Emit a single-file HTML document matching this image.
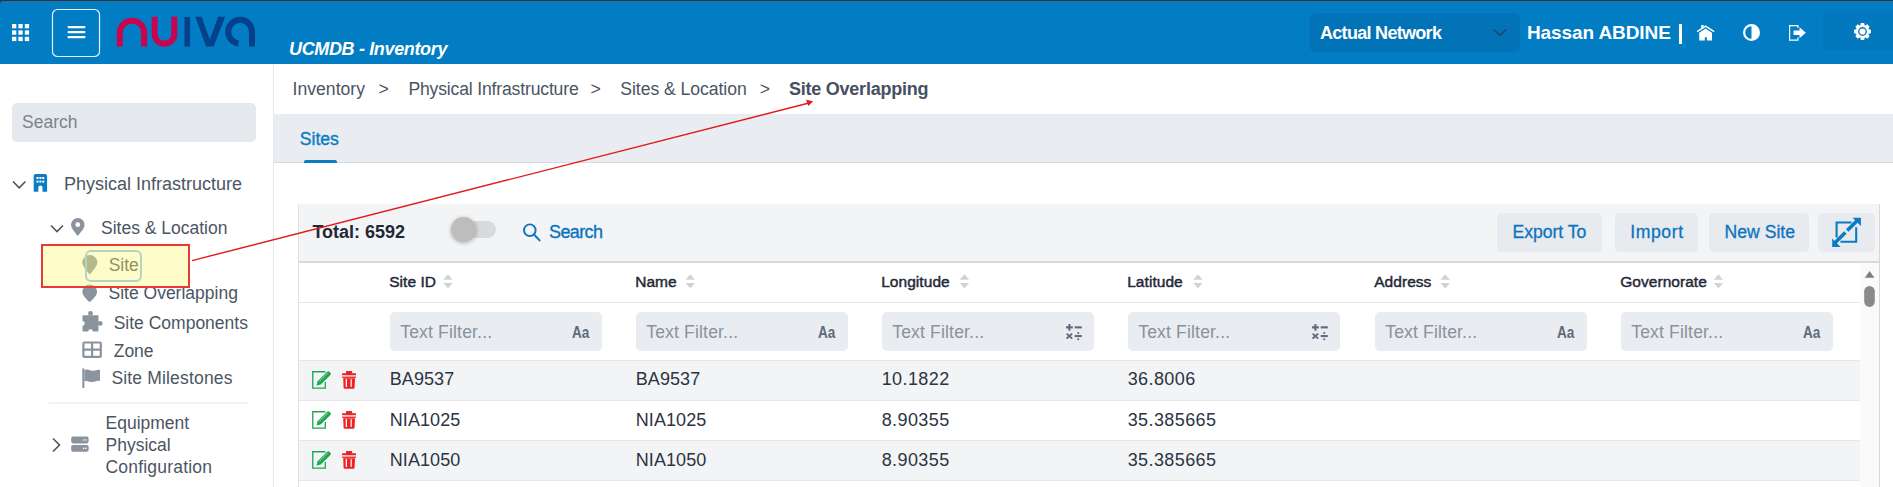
<!DOCTYPE html>
<html><head><meta charset="utf-8">
<style>
*{box-sizing:border-box;margin:0;padding:0}
html,body{width:1893px;height:487px;overflow:hidden;background:#fff;font-family:"Liberation Sans",sans-serif}
.a{position:absolute}
.t{position:absolute;white-space:nowrap;line-height:1}
.w{color:#fff;font-weight:bold}
.bc{color:#4b5463;font-size:17.6px}
.sb{color:#4b5563;font-size:17.5px}
.th{color:#1f2937;font-size:15.5px;font-weight:normal;letter-spacing:0.05px;-webkit-text-stroke:0.45px #1f2937}
.fi{background:#e9ecf0;border-radius:5px;height:38.8px;width:211.8px;top:312px}
.ph{color:#8a929c;font-size:17.6px;letter-spacing:0.15px}
.td{color:#2b3442;font-size:18px}
.btn{background:#e7eaee;border-radius:5px;top:213px;height:39px}
.bt{color:#0c74c0;font-size:17.6px;-webkit-text-stroke:0.3px #0c74c0}
</style></head>
<body>
<!-- HEADER -->
<div class="a" style="left:0;top:0;width:1893px;height:6px;background:#3a302a"></div>
<div class="a" style="left:0;top:1px;width:1893px;height:63px;background:#027dc4;border-top-left-radius:3px"></div>
<!-- apps grid -->
<svg class="a" style="left:0;top:0" width="110" height="64">
<g fill="#fff">
<rect x="12" y="24" width="4.3" height="4.3"/><rect x="18.4" y="24" width="4.3" height="4.3"/><rect x="24.8" y="24" width="4.3" height="4.3"/>
<rect x="12" y="30.4" width="4.3" height="4.3"/><rect x="18.4" y="30.4" width="4.3" height="4.3"/><rect x="24.8" y="30.4" width="4.3" height="4.3"/>
<rect x="12" y="36.8" width="4.3" height="4.3"/><rect x="18.4" y="36.8" width="4.3" height="4.3"/><rect x="24.8" y="36.8" width="4.3" height="4.3"/>
</g>
<rect x="52.5" y="9.5" width="47" height="47" rx="5" fill="none" stroke="#e8f2fa" stroke-width="1.2"/>
<g fill="#fff">
<rect x="67.5" y="25.9" width="18" height="2.3" rx="1.1"/>
<rect x="67.5" y="30.9" width="18" height="2.3" rx="1.1"/>
<rect x="67.5" y="36" width="18" height="2.3" rx="1.1"/>
</g>
</svg>
<!-- logo -->
<svg class="a" style="left:0;top:0" width="270" height="64">
<g fill="none" stroke="#c8044f" stroke-width="6">
<path d="M119.8 46.6V31.8A12.2 12.2 0 0 1 144.1 31.8V46.6"/>
<path d="M154.6 16.8V34A9.85 9.85 0 0 0 174.3 34V16.8"/>
</g>
<g fill="#05408a">
<rect x="184.5" y="17" width="5.6" height="29.6"/>
<polygon points="195.4,16.8 201.6,16.8 209.8,39.5 218.2,16.8 225.2,16.8 213.6,46.6 206,46.6"/>
</g>
<path d="M252 46.6V31.7A11.9 11.9 0 0 0 228.2 31.7A11.9 11.9 0 0 0 238.5 43.5" fill="none" stroke="#05408a" stroke-width="6"/>
</svg>
<div class="t w" style="left:289px;top:39.8px;font-size:18px;font-style:italic;letter-spacing:-0.35px">UCMDB - Inventory</div>

<!-- network dropdown -->
<div class="a" style="left:1310px;top:13px;width:210px;height:38.5px;background:#0373b8;border-radius:5px"></div>
<div class="t w" style="left:1320px;top:23.9px;font-size:18px;letter-spacing:-0.7px">Actual Network</div>
<svg class="a" style="left:1490px;top:24px" width="20" height="16"><path d="M3.6 5.4L9.8 11.4L16 5.4" fill="none" stroke="#1d4770" stroke-width="1.7"/></svg>
<div class="t w" style="left:1527px;top:22.8px;font-size:19px;letter-spacing:-0.1px">Hassan ABDINE</div>
<div class="a" style="left:1678.5px;top:24px;width:3px;height:19.5px;background:#fff"></div>
<!-- header icons -->
<div class="a" style="left:1823px;top:12px;width:70px;height:38px;background:#0378be"></div>
<svg class="a" style="left:1680px;top:0" width="213" height="64">
<g fill="#fff" transform="translate(-1680 0)">
<!-- home -->
<path d="M1697.1 31.6L1705.6 26.2L1714.1 31.6" fill="none" stroke="#fff" stroke-width="1.5"/>
<rect x="1701.2" y="25" width="2.4" height="3.4"/>
<path d="M1699.2 32.7L1705.6 28.4L1712 32.7V40.6H1706.9V37.2H1704.8V40.6H1699.2Z"/>
<!-- contrast -->
<circle cx="1751.5" cy="32.5" r="7.4" fill="none" stroke="#fff" stroke-width="2.2"/>
<path d="M1751.5 25.1A7.4 7.4 0 0 1 1751.5 39.9Z"/>
<!-- sign out -->
<path d="M1789 25H1798.5V28H1797.3V26.2H1790.2V39.5H1797.3V37.5H1798.5V40.7H1789Z"/>
<path d="M1793.5 30.5H1799.5V27.3L1805.8 32.8L1799.5 38.3V35.1H1793.5Z"/>
<!-- gear -->
<path d="M1860.32 25.17 L1860.86 23.06 L1864.14 23.06 L1864.68 25.17 L1865.44 25.48 L1867.31 24.37 L1869.63 26.69 L1868.52 28.56 L1868.83 29.32 L1870.94 29.86 L1870.94 33.14 L1868.83 33.68 L1868.52 34.44 L1869.63 36.31 L1867.31 38.63 L1865.44 37.52 L1864.68 37.83 L1864.14 39.94 L1860.86 39.94 L1860.32 37.83 L1859.56 37.52 L1857.69 38.63 L1855.37 36.31 L1856.48 34.44 L1856.17 33.68 L1854.06 33.14 L1854.06 29.86 L1856.17 29.32 L1856.48 28.56 L1855.37 26.69 L1857.69 24.37 L1859.56 25.48Z"/><circle cx="1862.5" cy="31.5" r="4.4" fill="#0378be"/><circle cx="1862.5" cy="31.5" r="3.1"/>
</g>
</svg>
<!--SIDEBAR-->
<div class="a" style="left:273px;top:64px;width:1px;height:423px;background:#e6e8ec"></div>
<div class="a" style="left:12px;top:103px;width:244px;height:39px;background:#e5e8ec;border-radius:5px"></div>
<div class="t" style="left:22px;top:113.9px;font-size:17.5px;color:#7b838d">Search</div>
<svg class="a" style="left:0;top:160px" width="273" height="327">
<g transform="translate(0 -160)">
<path d="M13 181.5L19.2 187.8L25.4 181.5" fill="none" stroke="#4b5563" stroke-width="1.6"/>
<path d="M33.7 176A2 2 0 0 1 35.7 174H45.1A2 2 0 0 1 47.1 176V191.8H42.5V187.5A2 2 0 0 0 38.3 187.5V191.8H33.7Z" fill="#0b7bc4"/>
<g fill="#fff"><rect x="36.5" y="177" width="2" height="2"/><rect x="39.4" y="177" width="2" height="2"/><rect x="42.3" y="177" width="2" height="2"/>
<rect x="36.5" y="180.6" width="2" height="2"/><rect x="39.4" y="180.6" width="2" height="2"/><rect x="42.3" y="180.6" width="2" height="2"/></g>
<path d="M51 225.5L57 231.5L63 225.5" fill="none" stroke="#4b5563" stroke-width="1.6"/>
<path d="M77.8 218A6.8 6.8 0 0 1 84.6 224.8C84.6 228.8 79.5 233.5 77.8 236C76.1 233.5 71 228.8 71 224.8A6.8 6.8 0 0 1 77.8 218ZM77.8 222.3A2.4 2.4 0 1 0 77.8 227.1A2.4 2.4 0 1 0 77.8 222.3Z" fill="#8a939e" fill-rule="evenodd"/>
<!-- site pin -->
<path d="M89.8 255A7.5 7.5 0 0 1 97.3 262.5C97.3 266 92.3 271.5 89.8 274.4C87.3 271.5 82.3 266 82.3 262.5A7.5 7.5 0 0 1 89.8 255Z" fill="#8a939e"/>
<!-- overlapping pin -->
<path d="M89.7 284.6A7.4 7.4 0 0 1 97.1 292C97.1 295.5 92 300 89.7 302.3C87.4 300 82.3 295.5 82.3 292A7.4 7.4 0 0 1 89.7 284.6Z" fill="#8a939e"/>
<!-- puzzle -->
<rect x="82.5" y="315.3" width="16" height="16.2" rx="1" fill="#8a939e"/>
<circle cx="90.5" cy="313.4" r="2.4" fill="#8a939e"/><circle cx="100.2" cy="323.4" r="2.4" fill="#8a939e"/>
<circle cx="82.4" cy="323.4" r="2.3" fill="#fff"/><circle cx="90.5" cy="331.6" r="2.3" fill="#fff"/>
<!-- zone grid -->
<g fill="none" stroke="#8a939e" stroke-width="2.2"><rect x="83.4" y="342.5" width="17.4" height="14.4" rx="1"/><path d="M92.1 342.5V356.9M83.4 349.7H100.8"/></g>
<!-- flag -->
<path d="M82.3 368.5H84.4V388.1H82.3Z" fill="#8a939e"/>
<path d="M84.4 370C88 368 91.5 372 95 370.5C97 369.8 99 369.6 100 370V381C97 380 94.5 382.5 91 382C88.5 381.7 86.5 380.5 84.4 381.3Z" fill="#8a939e"/>
<!-- separator -->
<rect x="48.5" y="402.5" width="199.5" height="1" fill="#e3e6ea"/>
<path d="M53 438.5L59.5 445L53 451.5" fill="none" stroke="#4b5563" stroke-width="1.6"/>
<!-- server icon -->
<rect x="71.2" y="436.6" width="17.4" height="6.8" rx="1.8" fill="#8a939e"/>
<rect x="71.2" y="445" width="17.4" height="6.8" rx="1.8" fill="#8a939e"/>
<rect x="83" y="439.3" width="1.3" height="1.3" fill="#fff"/><rect x="85.2" y="439.3" width="1.3" height="1.3" fill="#fff"/><rect x="83" y="447.7" width="1.3" height="1.3" fill="#fff"/><rect x="85.2" y="447.7" width="1.3" height="1.3" fill="#fff"/>
</g>
</svg>
<div class="t sb" style="left:64px;top:175.4px;font-size:18px">Physical Infrastructure</div>
<div class="t sb" style="left:101px;top:220.1px">Sites &amp; Location</div>
<div class="t sb" style="left:108.7px;top:257.2px">Site</div>
<div class="t sb" style="left:108.5px;top:285.1px">Site Overlapping</div>
<div class="t sb" style="left:113.7px;top:315px">Site Components</div>
<div class="t sb" style="left:113.7px;top:342.8px">Zone</div>
<div class="t sb" style="left:111.4px;top:370.4px;letter-spacing:0.17px">Site Milestones</div>
<div class="t sb" style="left:105.5px;top:414.6px">Equipment</div>
<div class="t sb" style="left:105.5px;top:436.7px">Physical</div>
<div class="t sb" style="left:105.5px;top:458.9px;letter-spacing:0.2px">Configuration</div>
<!--MAIN-->
<!-- breadcrumb -->
<div class="t bc" style="left:292.6px;top:81px">Inventory</div>
<div class="t bc" style="left:378.6px;top:81px">&gt;</div>
<div class="t bc" style="left:408.4px;top:81px;letter-spacing:-0.17px">Physical Infrastructure</div>
<div class="t bc" style="left:590.6px;top:81px">&gt;</div>
<div class="t bc" style="left:620.3px;top:81px;letter-spacing:-0.05px">Sites &amp; Location</div>
<div class="t bc" style="left:759.8px;top:81px">&gt;</div>
<div class="t bc" style="left:789px;top:80.3px;font-weight:bold;font-size:18px;color:#465061;letter-spacing:-0.24px">Site Overlapping</div>
<!-- tabs -->
<div class="a" style="left:274px;top:114px;width:1619px;height:49px;background:#e9ecf0;border-bottom:1px solid #d8dce2"></div>
<div class="t" style="left:299.8px;top:131.2px;font-size:17.6px;color:#0b7bc4;-webkit-text-stroke:0.35px #0b7bc4">Sites</div>
<div class="a" style="left:303.5px;top:159.8px;width:33.2px;height:3px;background:#0b7bc4;border-radius:2px 2px 0 0"></div>
<!-- card -->
<div class="a" style="left:298px;top:204px;width:1582px;height:59px;background:#f3f4f6;border-bottom:2px solid #d6dbe1"></div>
<div class="a" style="left:298px;top:204px;width:1px;height:283px;background:#dde1e6"></div>
<div class="a" style="left:1879px;top:204px;width:1px;height:283px;background:#d4d7db"></div>
<div class="t" style="left:312.4px;top:222.5px;font-size:18px;font-weight:bold;color:#1f2937">Total: 6592</div>
<div class="a" style="left:458px;top:221px;width:38px;height:17px;border-radius:9px;background:#d9dadc"></div>
<div class="a" style="left:451px;top:217px;width:25px;height:25px;border-radius:50%;background:#bdbdbd;box-shadow:0 1px 4px rgba(0,0,0,0.3)"></div>
<svg class="a" style="left:520px;top:220px" width="24" height="24"><circle cx="9.8" cy="10.2" r="5.8" fill="none" stroke="#0b74bd" stroke-width="1.9"/><path d="M14 14.5L19.6 20.4" stroke="#0b74bd" stroke-width="2" stroke-linecap="round"/></svg>
<div class="t" style="left:549px;top:223.3px;font-size:18px;color:#0b74bd;letter-spacing:-0.6px;-webkit-text-stroke:0.35px #0b74bd">Search</div>
<div class="a btn" style="left:1497px;width:104.6px"></div>
<div class="t bt" style="left:1512.4px;top:223.6px">Export To</div>
<div class="a btn" style="left:1614.7px;width:83.0px"></div>
<div class="t bt" style="left:1630.2px;top:223.6px;letter-spacing:0.6px">Import</div>
<div class="a btn" style="left:1709.1px;width:99.5px"></div>
<div class="t bt" style="left:1724.6px;top:223.6px">New Site</div>
<div class="a btn" style="left:1818px;width:56.6px"></div>
<svg class="a" style="left:1826px;top:212px" width="40" height="40"><g transform="translate(-1826 -212)" fill="#0b7bc4" stroke="#0b7bc4"><path d="M1836.6 237.5V222.45H1851.5M1856.2 227.2V241.75H1840.4" fill="none" stroke-width="2.1"/><path d="M1847.2 230.6L1858 219.8M1845.3 232.5L1835 242.8" fill="none" stroke-width="3.6"/><path d="M1852.6 217.7H1860.9V226Z M1832.2 238.4V246.9H1840.6Z" stroke="none"/></g></svg>
<div class="t th" style="left:389.2px;top:274.3px">Site ID</div>
<div class="t th" style="left:635.2px;top:274.3px">Name</div>
<div class="t th" style="left:881.2px;top:274.3px">Longitude</div>
<div class="t th" style="left:1127.2px;top:274.3px">Latitude</div>
<div class="t th" style="left:1374.2px;top:274.3px">Address</div>
<div class="t th" style="left:1620.2px;top:274.3px">Governorate</div>
<svg class="a" style="left:0;top:262px" width="1893" height="40"><g fill="#cfd3d9" transform="translate(0 -262)"><path d="M443.3 279.7L447.95 274.3L452.6 279.7Z M443.3 283L447.95 288.4L452.6 283Z"/><path d="M685.7 279.7L690.35 274.3L695.0 279.7Z M685.7 283L690.35 288.4L695.0 283Z"/><path d="M959.8 279.7L964.4499999999999 274.3L969.0999999999999 279.7Z M959.8 283L964.4499999999999 288.4L969.0999999999999 283Z"/><path d="M1193.3 279.7L1197.95 274.3L1202.6 279.7Z M1193.3 283L1197.95 288.4L1202.6 283Z"/><path d="M1440.6 279.7L1445.25 274.3L1449.8999999999999 279.7Z M1440.6 283L1445.25 288.4L1449.8999999999999 283Z"/><path d="M1713.8 279.7L1718.45 274.3L1723.1 279.7Z M1713.8 283L1718.45 288.4L1723.1 283Z"/></g></svg>
<div class="a" style="left:299px;top:302px;width:1561px;height:1px;background:#e5e7eb"></div>
<div class="a fi" style="left:390px"></div>
<div class="t ph" style="left:400.2px;top:324.2px">Text Filter...</div>
<div class="t" style="left:572.3px;top:323.6px;font-size:16.5px;font-weight:bold;color:#5f6b7a;transform:scaleX(0.82);transform-origin:0 0">Aa</div>
<div class="a fi" style="left:636px"></div>
<div class="t ph" style="left:646.2px;top:324.2px">Text Filter...</div>
<div class="t" style="left:818.3px;top:323.6px;font-size:16.5px;font-weight:bold;color:#5f6b7a;transform:scaleX(0.82);transform-origin:0 0">Aa</div>
<div class="a fi" style="left:882px"></div>
<div class="t ph" style="left:892.2px;top:324.2px">Text Filter...</div>
<svg class="a" style="left:1066px;top:322px" width="18" height="19"><g fill="#5f6b7a" transform="translate(-1066 -322)"><rect x="1066" y="326.3" width="6.8" height="2.1"/><rect x="1068.35" y="324.1" width="2.1" height="6.6"/><rect x="1074.7" y="326.3" width="7.1" height="2.1"/><path d="M1066.6 333.6L1072.2 338.6M1072.2 333.6L1066.6 338.6" stroke="#5f6b7a" stroke-width="1.9"/><rect x="1074.7" y="335" width="7.1" height="2.1"/><circle cx="1078.25" cy="333" r="1.05"/><circle cx="1078.25" cy="339.2" r="1.05"/></g></svg>
<div class="a fi" style="left:1128px"></div>
<div class="t ph" style="left:1138.2px;top:324.2px">Text Filter...</div>
<svg class="a" style="left:1312px;top:322px" width="18" height="19"><g fill="#5f6b7a" transform="translate(-1312 -322)"><rect x="1312" y="326.3" width="6.8" height="2.1"/><rect x="1314.35" y="324.1" width="2.1" height="6.6"/><rect x="1320.7" y="326.3" width="7.1" height="2.1"/><path d="M1312.6 333.6L1318.2 338.6M1318.2 333.6L1312.6 338.6" stroke="#5f6b7a" stroke-width="1.9"/><rect x="1320.7" y="335" width="7.1" height="2.1"/><circle cx="1324.25" cy="333" r="1.05"/><circle cx="1324.25" cy="339.2" r="1.05"/></g></svg>
<div class="a fi" style="left:1375px"></div>
<div class="t ph" style="left:1385.2px;top:324.2px">Text Filter...</div>
<div class="t" style="left:1557.3px;top:323.6px;font-size:16.5px;font-weight:bold;color:#5f6b7a;transform:scaleX(0.82);transform-origin:0 0">Aa</div>
<div class="a fi" style="left:1621px"></div>
<div class="t ph" style="left:1631.2px;top:324.2px">Text Filter...</div>
<div class="t" style="left:1803.3px;top:323.6px;font-size:16.5px;font-weight:bold;color:#5f6b7a;transform:scaleX(0.82);transform-origin:0 0">Aa</div>
<div class="a" style="left:299px;top:360px;width:1561px;height:1px;background:#e5e7eb"></div>
<div class="a" style="left:299px;top:361px;width:1561px;height:39px;background:#f3f4f6"></div>
<div class="a" style="left:299px;top:400px;width:1561px;height:1px;background:#e5e7eb"></div>
<div class="t td" style="left:389.7px;top:369.9px;letter-spacing:0.1px">BA9537</div>
<div class="t td" style="left:635.7px;top:369.9px;letter-spacing:0.1px">BA9537</div>
<div class="t td" style="left:881.7px;top:369.9px;letter-spacing:0.4px">10.1822</div>
<div class="t td" style="left:1127.7px;top:369.9px;letter-spacing:0.4px">36.8006</div>
<svg class="a" style="left:305px;top:361px" width="60" height="39"><g><g transform="translate(-305 -361)"><path d="M325.3 382V388.15H312.75V371.75H325.5" fill="none" stroke="#1ea550" stroke-width="1.3"/><path d="M316.6 385.6L317.6 381.3L327.2 371.7A1.5 1.5 0 0 1 329.3 371.7L330.4 372.8A1.5 1.5 0 0 1 330.4 374.9L320.8 384.5Z" fill="#1ea550"/><path d="M319.2 381.5L327.6 373.1" stroke="#e9f5ec" stroke-width="0.6"/><path d="M346 373.3V371.9A0.9 0.9 0 0 1 346.9 371H351.3A0.9 0.9 0 0 1 352.2 371.9V373.3H356V375.2H342.1V373.3Z" fill="#ec2224"/><rect x="342.1" y="376.6" width="13.9" height="1.3" fill="#ec2224"/><path d="M343.2 378.2H355L354.6 387.4A1.4 1.4 0 0 1 353.2 388.8H345A1.4 1.4 0 0 1 343.6 387.4Z" fill="#ec2224"/><rect x="345.7" y="379.2" width="1.3" height="7.7" fill="#fff"/><rect x="350.6" y="379.2" width="1.2" height="7.7" fill="#fff"/><rect x="347.9" y="373.8" width="2.6" height="0.01" fill="#fff"/></g></g></svg>
<div class="a" style="left:299px;top:401px;width:1561px;height:39px;background:#ffffff"></div>
<div class="a" style="left:299px;top:440px;width:1561px;height:1px;background:#e5e7eb"></div>
<div class="t td" style="left:389.7px;top:410.8px;letter-spacing:0.1px">NIA1025</div>
<div class="t td" style="left:635.7px;top:410.8px;letter-spacing:0.1px">NIA1025</div>
<div class="t td" style="left:881.7px;top:410.8px;letter-spacing:0.4px">8.90355</div>
<div class="t td" style="left:1127.7px;top:410.8px;letter-spacing:0.4px">35.385665</div>
<svg class="a" style="left:305px;top:400.5px" width="60" height="39"><g><g transform="translate(-305 -361)"><path d="M325.3 382V388.15H312.75V371.75H325.5" fill="none" stroke="#1ea550" stroke-width="1.3"/><path d="M316.6 385.6L317.6 381.3L327.2 371.7A1.5 1.5 0 0 1 329.3 371.7L330.4 372.8A1.5 1.5 0 0 1 330.4 374.9L320.8 384.5Z" fill="#1ea550"/><path d="M319.2 381.5L327.6 373.1" stroke="#e9f5ec" stroke-width="0.6"/><path d="M346 373.3V371.9A0.9 0.9 0 0 1 346.9 371H351.3A0.9 0.9 0 0 1 352.2 371.9V373.3H356V375.2H342.1V373.3Z" fill="#ec2224"/><rect x="342.1" y="376.6" width="13.9" height="1.3" fill="#ec2224"/><path d="M343.2 378.2H355L354.6 387.4A1.4 1.4 0 0 1 353.2 388.8H345A1.4 1.4 0 0 1 343.6 387.4Z" fill="#ec2224"/><rect x="345.7" y="379.2" width="1.3" height="7.7" fill="#fff"/><rect x="350.6" y="379.2" width="1.2" height="7.7" fill="#fff"/><rect x="347.9" y="373.8" width="2.6" height="0.01" fill="#fff"/></g></g></svg>
<div class="a" style="left:299px;top:441px;width:1561px;height:39px;background:#f3f4f6"></div>
<div class="a" style="left:299px;top:480px;width:1561px;height:1px;background:#e5e7eb"></div>
<div class="t td" style="left:389.7px;top:450.8px;letter-spacing:0.1px">NIA1050</div>
<div class="t td" style="left:635.7px;top:450.8px;letter-spacing:0.1px">NIA1050</div>
<div class="t td" style="left:881.7px;top:450.8px;letter-spacing:0.4px">8.90355</div>
<div class="t td" style="left:1127.7px;top:450.8px;letter-spacing:0.4px">35.385665</div>
<svg class="a" style="left:305px;top:440.8px" width="60" height="39"><g><g transform="translate(-305 -361)"><path d="M325.3 382V388.15H312.75V371.75H325.5" fill="none" stroke="#1ea550" stroke-width="1.3"/><path d="M316.6 385.6L317.6 381.3L327.2 371.7A1.5 1.5 0 0 1 329.3 371.7L330.4 372.8A1.5 1.5 0 0 1 330.4 374.9L320.8 384.5Z" fill="#1ea550"/><path d="M319.2 381.5L327.6 373.1" stroke="#e9f5ec" stroke-width="0.6"/><path d="M346 373.3V371.9A0.9 0.9 0 0 1 346.9 371H351.3A0.9 0.9 0 0 1 352.2 371.9V373.3H356V375.2H342.1V373.3Z" fill="#ec2224"/><rect x="342.1" y="376.6" width="13.9" height="1.3" fill="#ec2224"/><path d="M343.2 378.2H355L354.6 387.4A1.4 1.4 0 0 1 353.2 388.8H345A1.4 1.4 0 0 1 343.6 387.4Z" fill="#ec2224"/><rect x="345.7" y="379.2" width="1.3" height="7.7" fill="#fff"/><rect x="350.6" y="379.2" width="1.2" height="7.7" fill="#fff"/><rect x="347.9" y="373.8" width="2.6" height="0.01" fill="#fff"/></g></g></svg>
<div class="a" style="left:299px;top:481px;width:1561px;height:6px;background:#fff"></div>
<div class="a" style="left:1860px;top:263px;width:19px;height:224px;background:#fafafa"></div>
<svg class="a" style="left:1860px;top:262px" width="19" height="60"><path d="M4.8 15.8L9.6 9L14.4 15.8Z" fill="#7d7d7d"/><rect x="4.2" y="24" width="10.6" height="20.9" rx="5.3" fill="#8a8a8a"/></svg>
<!--ANNOT-->
<div class="a" style="left:85px;top:249.8px;width:56.6px;height:32.2px;border:2.3px solid #85bdfa;border-radius:6px"></div>
<div class="a" style="left:41px;top:244.5px;width:149px;height:43.5px;background:rgba(252,247,109,0.376)"></div>
<div class="a" style="left:40.6px;top:244px;width:149.9px;height:44.3px;border:2px solid #e63a36"></div>
<svg class="a" style="left:0;top:0" width="1893" height="487">
<path d="M192 260.6L808 103.2" stroke="#e2191b" stroke-width="1.4" fill="none"/>
<path d="M813.1 101.3L806 99.8L808.4 106Z" fill="#e2191b"/>
</svg>
</body></html>
